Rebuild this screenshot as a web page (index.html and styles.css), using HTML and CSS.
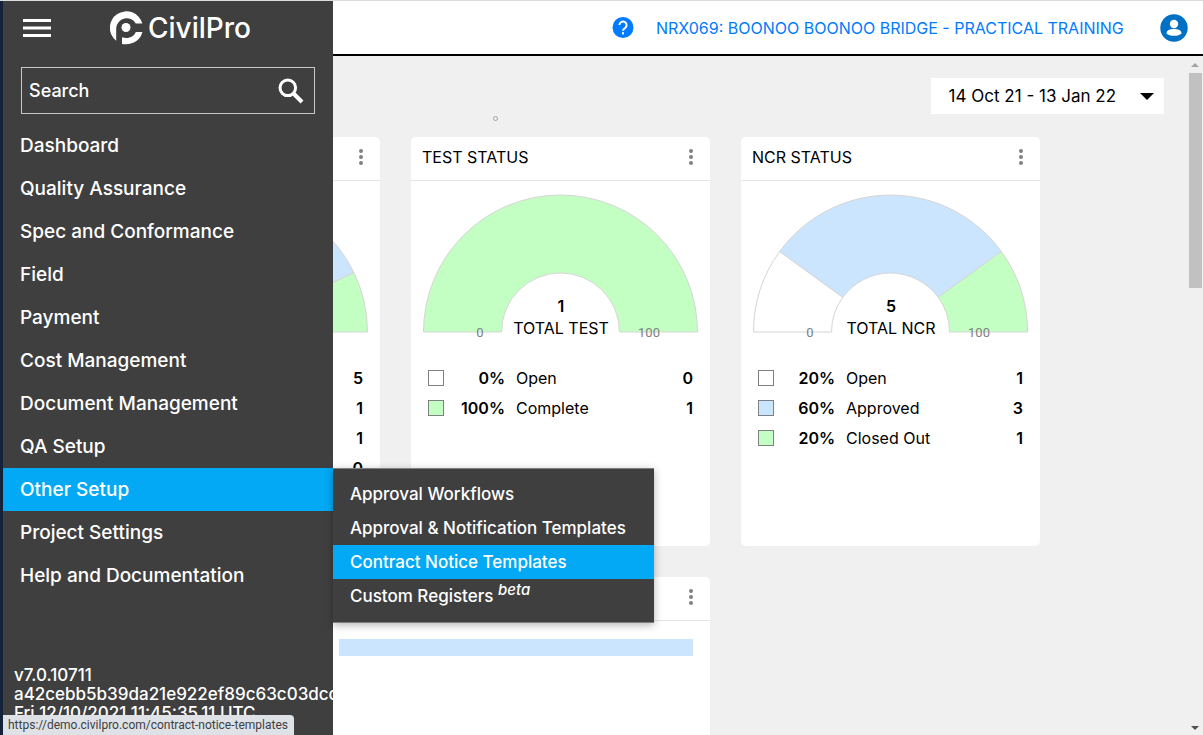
FILE: index.html
```html
<!DOCTYPE html>
<html lang="en">
<head>
    <meta charset="UTF-8">
    <meta name="viewport" content="width=device-width, initial-scale=1.0">
    <title>CivilPro</title>
    <link rel="stylesheet" href="styles.css">
</head>
<body>
    <header class="topbar">
        <a href="#" class="help" aria-label="Help">
            <svg width="22" height="22" viewBox="0 0 22 22">
                <circle cx="11" cy="10.500" r="10.500" fill="#007bff"/>
                <path d="M7.400 8.100a3.600 3.600 0 1 1 5.600 3c-1.300.9-2 1.300-2 2.700" fill="none" stroke="#fff" stroke-width="2"/>
                <rect x="10" y="15.200" width="2" height="2.200" fill="#fff"/>
            </svg>
        </a>
        <a href="#" class="project">NRX069: BOONOO BOONOO BRIDGE - PRACTICAL TRAINING</a>
        <button class="icon-btn" aria-label="Account">
            <svg width="28" height="28" viewBox="0 0 28 28">
                <circle cx="14" cy="14" r="13.700" fill="#0070c5"/>
                <circle cx="14" cy="10" r="4.200" fill="#fff"/>
                <path d="M6.500 19.500c0-3.600 3.700-4.600 7.500-4.600s7.500 1 7.500 4.600c-1.600 1.600-4.300 2.300-7.500 2.300s-5.900-.7-7.500-2.300z" fill="#fff"/>
            </svg>
        </button>
    </header>

    <div class="page">
        <main class="content">
            <div class="toolbar">
                <span class="loading"></span>
                <button class="date-range">
                    14 Oct 21 - 13 Jan 22
                    <svg width="14" height="7" viewBox="0 0 14 7"><path d="M0 0h14L7 7z"/></svg>
                </button>
            </div>

            <div class="cards">
                <section class="card">
                    <div class="card-head">
                        <h2></h2>
                        <button class="icon-btn" aria-label="Options">
                            <svg width="6" height="16" viewBox="0 0 6 16" fill="#808080"><circle cx="3" cy="2" r="2"/><circle cx="3" cy="8" r="2"/><circle cx="3" cy="14" r="2"/></svg>
                        </button>
                    </div>
                    <svg class="gauge" viewBox="0 0 299 165">
                        <path fill="#fff" d="M12.500 151A137 137 0 0 1 234.900 43.900L186.300 104.900A59 59 0 0 0 90.500 151z"/>
                        <path fill="#cce5ff" d="M234.900 43.900A137 137 0 0 1 272.900 91.600L202.700 125.400A59 59 0 0 0 186.300 104.900z"/>
                        <path fill="#c3ffc3" d="M272.900 91.600A137 137 0 0 1 286.500 151H208.500A59 59 0 0 0 202.700 125.400z"/>
                    </svg>
                    <table class="legend">
                        <tr><td></td><td></td><td></td><td class="count">5</td></tr>
                        <tr><td></td><td></td><td></td><td class="count">1</td></tr>
                        <tr><td></td><td></td><td></td><td class="count">1</td></tr>
                        <tr><td></td><td></td><td></td><td class="count">0</td></tr>
                    </table>
                </section>

                <section class="card">
                    <div class="card-head">
                        <h2>TEST STATUS</h2>
                        <button class="icon-btn" aria-label="Options">
                            <svg width="6" height="16" viewBox="0 0 6 16" fill="#808080"><circle cx="3" cy="2" r="2"/><circle cx="3" cy="8" r="2"/><circle cx="3" cy="14" r="2"/></svg>
                        </button>
                    </div>
                    <svg class="gauge" viewBox="0 0 299 165">
                        <path fill="#c3ffc3" d="M12.500 151A137 137 0 0 1 286.500 151H208.500A59 59 0 0 0 90.500 151z"/>
                        <text class="total" x="150" y="131">1</text>
                        <text class="caption" x="150" y="153">TOTAL TEST</text>
                        <text class="tick" x="69" y="156">0</text>
                        <text class="tick" x="238" y="156">100</text>
                    </svg>
                    <table class="legend">
                        <tr><td><span class="swatch"></span></td><td class="percent">0%</td><td class="name">Open</td><td class="count">0</td></tr>
                        <tr><td><span class="swatch green"></span></td><td class="percent">100%</td><td class="name">Complete</td><td class="count">1</td></tr>
                    </table>
                </section>

                <section class="card">
                    <div class="card-head">
                        <h2>NCR STATUS</h2>
                        <button class="icon-btn" aria-label="Options">
                            <svg width="6" height="16" viewBox="0 0 6 16" fill="#808080"><circle cx="3" cy="2" r="2"/><circle cx="3" cy="8" r="2"/><circle cx="3" cy="14" r="2"/></svg>
                        </button>
                    </div>
                    <svg class="gauge" viewBox="0 0 299 165">
                        <path fill="#fff" d="M12.500 151A137 137 0 0 1 38.700 70.500L101.800 116.300A59 59 0 0 0 90.500 151z"/>
                        <path fill="#cce5ff" d="M38.700 70.500A137 137 0 0 1 260.300 70.500L197.200 116.300A59 59 0 0 0 101.800 116.300z"/>
                        <path fill="#c3ffc3" d="M260.300 70.500A137 137 0 0 1 286.500 151H208.500A59 59 0 0 0 197.200 116.300z"/>
                        <text class="total" x="150" y="131">5</text>
                        <text class="caption" x="150" y="153">TOTAL NCR</text>
                        <text class="tick" x="69" y="156">0</text>
                        <text class="tick" x="238" y="156">100</text>
                    </svg>
                    <table class="legend">
                        <tr><td><span class="swatch"></span></td><td class="percent">20%</td><td class="name">Open</td><td class="count">1</td></tr>
                        <tr><td><span class="swatch blue"></span></td><td class="percent">60%</td><td class="name">Approved</td><td class="count">3</td></tr>
                        <tr><td><span class="swatch green"></span></td><td class="percent">20%</td><td class="name">Closed Out</td><td class="count">1</td></tr>
                    </table>
                </section>

                <section class="card wide">
                    <div class="card-head">
                        <h2></h2>
                        <button class="icon-btn" aria-label="Options">
                            <svg width="6" height="16" viewBox="0 0 6 16" fill="#808080"><circle cx="3" cy="2" r="2"/><circle cx="3" cy="8" r="2"/><circle cx="3" cy="14" r="2"/></svg>
                        </button>
                    </div>
                    <div class="bars">
                        <div class="bar"></div>
                    </div>
                </section>
            </div>
        </main>

        <div class="scrollbar">
            <svg width="8" height="4" viewBox="0 0 8 4"><path d="M0 4h8L4 0z" fill="#a3a3a3"/></svg>
            <div class="thumb"></div>
            <svg width="8" height="4" viewBox="0 0 8 4"><path d="M0 0h8L4 4z" fill="#505050"/></svg>
        </div>
    </div>

    <aside class="sidebar">
        <div class="brand">
            <button class="icon-btn" aria-label="Menu">
                <svg width="28" height="18" viewBox="0 0 28 18" fill="#fff"><path d="M0 0h28v3H0zM0 7.500h28v3H0zM0 15h28v3H0z"/></svg>
            </button>
            <a href="#" class="logo">
                <svg width="33" height="34" viewBox="0 0 33 34">
                    <path d="M6.200 29.800A16.500 16.500 0 1 1 32.300 12.500H25.800A10.500 10.500 0 0 0 6.200 17z" fill="#fff"/>
                    <path d="M12 26.300C18 28.300 24 26 25.800 21H32.400C30.500 29 23 34.500 12 33z" fill="#fff"/>
                    <circle cx="16" cy="16.500" r="4.500" fill="#fff"/>
                </svg>
                CivilPro
            </a>
        </div>

        <form class="search">
            <input type="text" placeholder="Search" aria-label="Search">
            <button class="icon-btn" aria-label="Search">
                <svg width="26" height="26" viewBox="0 0 26 26" fill="none" stroke="#fff"><circle cx="9.800" cy="9.800" r="7.800" stroke-width="3"/><path d="M15.500 15.500l8.500 8.500" stroke-width="4"/></svg>
            </button>
        </form>

        <ul class="menu">
            <li><a href="#">Dashboard</a></li>
            <li><a href="#">Quality Assurance</a></li>
            <li><a href="#">Spec and Conformance</a></li>
            <li><a href="#">Field</a></li>
            <li><a href="#">Payment</a></li>
            <li><a href="#">Cost Management</a></li>
            <li><a href="#">Document Management</a></li>
            <li><a href="#">QA Setup</a></li>
            <li>
                <a href="#" class="active">Other Setup</a>
                <ul class="submenu">
                    <li><a href="#">Approval Workflows</a></li>
                    <li><a href="#">Approval &amp; Notification Templates</a></li>
                    <li><a href="#" class="active">Contract Notice Templates</a></li>
                    <li><a href="#">Custom Registers <sup>beta</sup></a></li>
                </ul>
            </li>
            <li><a href="#">Project Settings</a></li>
            <li><a href="#">Help and Documentation</a></li>
        </ul>

        <div class="version">
            v7.0.10711<br>
            a42cebb5b39da21e922ef89c63c03dcc<br>
            Fri 12/10/2021 11:45:35.11 UTC
        </div>
    </aside>

    <div class="link-status">https://demo.civilpro.com/contract-notice-templates</div>
</body>
</html>
```
FILE: styles.css
```css
* {
    box-sizing: border-box;
}
body {
    display: flex;
    flex-direction: column;
    position: relative;
    height: 100vh;
    margin: 0;
    border-top: 1px solid #dcdcdc;
    overflow: hidden;
    font-family: Inter, "Noto Sans", sans-serif;
    font-size: 16px;
    color: #000;
    background: #f0f0f0;
}
a {
    color: inherit;
    text-decoration: none;
}
ul {
    list-style: none;
    margin: 0;
    padding: 0;
}
svg {
    display: block;
    flex: none;
}
.icon-btn {
    padding: 0;
    border: none;
    background: none;
}

/* top bar */
.topbar {
    display: flex;
    flex: none;
    align-items: center;
    justify-content: flex-end;
    gap: 22px;
    height: 55px;
    padding-right: 15px;
    background: #fff;
    border-bottom: 2px solid #000;
}
.project {
    min-width: 482px;
    color: #007bff;
    font-size: 16px;
}

/* page */
.page {
    display: flex;
    flex: 1;
    min-height: 0;
}
.content {
    flex: 1;
    overflow: hidden;
    padding: 22px 0 0 81px;
}
.toolbar {
    display: flex;
    align-items: flex-start;
    justify-content: space-between;
    height: 59px;
    padding: 0 23px 0 412px;
}
.loading {
    width: 5px;
    height: 5px;
    margin-top: 38px;
    border: 1px solid #a0a0b4;
    border-radius: 50%;
}
.date-range {
    display: flex;
    align-items: center;
    gap: 24px;
    height: 36px;
    padding: 0 10px 0 18px;
    border: none;
    background: #fff;
    color: #000;
    font-family: inherit;
    font-size: 17px;
}
.cards {
    display: grid;
    grid-template-columns: repeat(auto-fill, 299px);
    grid-auto-rows: 409px;
    gap: 31px;
}
.card {
    background: #fff;
    border-radius: 5px;
}
.wide {
    grid-column: span 2;
}
.card-head {
    display: flex;
    align-items: center;
    justify-content: space-between;
    height: 44px;
    padding: 0 16px 4px 11px;
    border-bottom: 1px solid #e4e4e4;
}
.card-head h2 {
    margin: 0;
    font-size: 16px;
    font-weight: 400;
}

/* half-circle charts */
.gauge {
    width: 100%;
}
.gauge path {
    stroke: #d5d5d5;
}
.gauge text {
    text-anchor: middle;
}
.total {
    font-size: 16px;
    font-weight: 600;
}
.caption {
    font-size: 16px;
}
.tick {
    font-family: Roboto, sans-serif;
    font-size: 13px;
    fill: #808080;
}
.legend {
    width: 100%;
    margin-top: 17px;
    padding: 0 17px;
    border-spacing: 0;
}
.legend td {
    height: 30px;
    padding: 0;
}
.legend td:first-child {
    width: 24px;
}
.swatch {
    display: block;
    width: 16px;
    height: 16px;
    border: 1px solid #808080;
}
.green {
    background: #c3ffc3;
}
.blue {
    background: #cce5ff;
}
.legend .percent {
    width: 53px;
    font-weight: 600;
    text-align: right;
}
.legend .name {
    padding-left: 11px;
    font-size: 16px;
}
.legend .count {
    font-weight: 600;
    text-align: right;
}
.bars {
    padding: 18px 17px 0 258px;
}
.bar {
    height: 17px;
    background: #cce5ff;
}

/* scrollbar */
.scrollbar {
    display: flex;
    flex-direction: column;
    align-items: center;
    width: 16px;
    padding: 7px 1px 5px;
}
.thumb {
    width: 13px;
    height: 215px;
    margin: 6px 0 auto;
    background: #c1c1c1;
}

/* side menu, opens over the page */
.sidebar {
    position: absolute;
    top: 0;
    bottom: 0;
    left: 0;
    display: flex;
    flex-direction: column;
    width: 333px;
    border-left: 3px solid #14233a;
    background: #3f3f3f;
    color: #fff;
    font-weight: 500;
}
.brand {
    display: flex;
    align-items: center;
    gap: 59px;
    height: 54px;
    padding-left: 20px;
}
.logo {
    display: flex;
    align-items: center;
    gap: 5px;
    font-size: 28px;
}
.search {
    display: flex;
    align-items: center;
    height: 47px;
    margin: 12px 18px 10px;
    padding: 0 10px 0 7px;
    border: 1px solid #c8c8c8;
}
.search input {
    flex: 1;
    min-width: 0;
    padding: 0;
    border: none;
    background: none;
    color: #fff;
    font: inherit;
    font-size: 18px;
}
.search input::placeholder {
    color: #fff;
}
.menu > li {
    position: relative;
}
.menu > li > a {
    display: block;
    padding-left: 17px;
    font-size: 19px;
    line-height: 43px;
}
.menu .active {
    background: #03a9f4;
}
.submenu {
    position: absolute;
    top: 0;
    left: 100%;
    min-width: 321px;
    padding: 8px 0 9px;
    border: solid #808080;
    border-width: 1px 0;
    background: #3f3f3f;
    box-shadow: 0 2px 8px rgba(0, 0, 0, 0.3);
    white-space: nowrap;
}
.submenu a {
    display: block;
    padding: 0 17px;
    font-size: 17px;
    line-height: 34px;
}
.submenu sup {
    font-size: 15px;
    font-style: italic;
    line-height: 0;
}
.version {
    margin-top: auto;
    padding: 0 0 12px 11px;
    overflow: hidden;
    font-size: 17px;
    line-height: 19px;
    white-space: nowrap;
}

/* browser link preview */
.link-status {
    position: absolute;
    bottom: 0;
    left: 3px;
    padding: 0 6px 0 5px;
    border-radius: 0 4px 0 0;
    background: #dee1e6;
    color: #3c4043;
    font-family: Roboto, sans-serif;
    font-size: 12px;
    line-height: 20px;
}
```
